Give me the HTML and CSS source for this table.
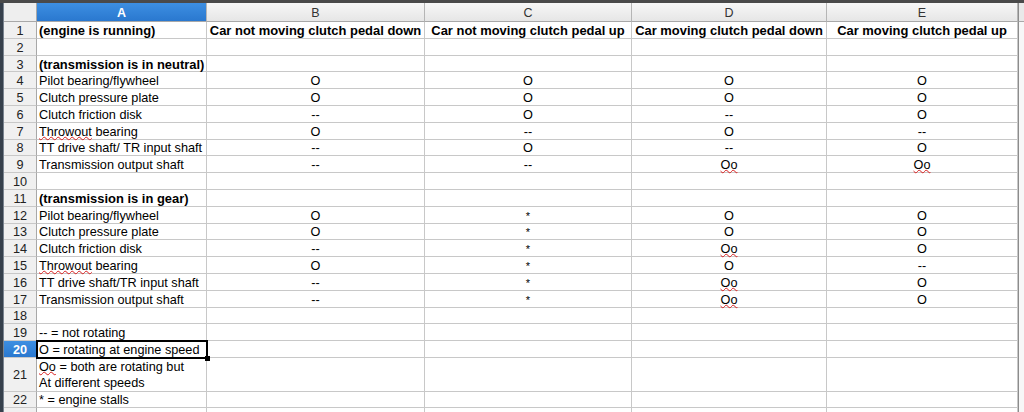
FILE: index.html
```html
<!DOCTYPE html>
<html>
<head>
<meta charset="utf-8">
<link rel="stylesheet" href="styles.css">
</head>
<body>
<div class="frame">
  <div class="strip"></div>
  <div class="sheet">
    <div class="c corner"></div><div class="c ch sel">A</div><div class="c ch">B</div><div class="c ch">C</div><div class="c ch">D</div><div class="c ch">E</div><div class="fhead"></div>
    <div class="fbody"></div>

    <div class="c rh">1</div><div class="c b">(engine is running)</div><div class="c v b">Car not moving clutch pedal down</div><div class="c v b">Car not moving clutch pedal up</div><div class="c v b">Car moving clutch pedal down</div><div class="c v b">Car moving clutch pedal up</div>
    <div class="c rh">2</div><div class="c"></div><div class="c"></div><div class="c"></div><div class="c"></div><div class="c"></div>
    <div class="c rh">3</div><div class="c b">(transmission is in neutral)</div><div class="c"></div><div class="c"></div><div class="c"></div><div class="c"></div>
    <div class="c rh">4</div><div class="c">Pilot bearing/flywheel</div><div class="c v">O</div><div class="c v">O</div><div class="c v">O</div><div class="c v">O</div>
    <div class="c rh">5</div><div class="c">Clutch pressure plate</div><div class="c v">O</div><div class="c v">O</div><div class="c v">O</div><div class="c v">O</div>
    <div class="c rh">6</div><div class="c">Clutch friction disk</div><div class="c v">--</div><div class="c v">O</div><div class="c v">--</div><div class="c v">O</div>
    <div class="c rh">7</div><div class="c"><span class="sp">Throwout</span>&nbsp;bearing</div><div class="c v">O</div><div class="c v">--</div><div class="c v">O</div><div class="c v">--</div>
    <div class="c rh">8</div><div class="c">TT drive shaft/ TR input shaft</div><div class="c v">--</div><div class="c v">O</div><div class="c v">--</div><div class="c v">O</div>
    <div class="c rh">9</div><div class="c">Transmission output shaft</div><div class="c v">--</div><div class="c v">--</div><div class="c v"><span class="sp">Oo</span></div><div class="c v"><span class="sp">Oo</span></div>
    <div class="c rh">10</div><div class="c"></div><div class="c"></div><div class="c"></div><div class="c"></div><div class="c"></div>
    <div class="c rh">11</div><div class="c b">(transmission is in gear)</div><div class="c"></div><div class="c"></div><div class="c"></div><div class="c"></div>
    <div class="c rh">12</div><div class="c">Pilot bearing/flywheel</div><div class="c v">O</div><div class="c v st">*</div><div class="c v">O</div><div class="c v">O</div>
    <div class="c rh">13</div><div class="c">Clutch pressure plate</div><div class="c v">O</div><div class="c v st">*</div><div class="c v">O</div><div class="c v">O</div>
    <div class="c rh">14</div><div class="c">Clutch friction disk</div><div class="c v">--</div><div class="c v st">*</div><div class="c v"><span class="sp">Oo</span></div><div class="c v">O</div>
    <div class="c rh">15</div><div class="c"><span class="sp">Throwout</span>&nbsp;bearing</div><div class="c v">O</div><div class="c v st">*</div><div class="c v">O</div><div class="c v">--</div>
    <div class="c rh">16</div><div class="c">TT drive shaft/TR input shaft</div><div class="c v">--</div><div class="c v st">*</div><div class="c v"><span class="sp">Oo</span></div><div class="c v">O</div>
    <div class="c rh">17</div><div class="c">Transmission output shaft</div><div class="c v">--</div><div class="c v st">*</div><div class="c v"><span class="sp">Oo</span></div><div class="c v">O</div>
    <div class="c rh">18</div><div class="c"></div><div class="c"></div><div class="c"></div><div class="c"></div><div class="c"></div>
    <div class="c rh">19</div><div class="c">-- = not rotating</div><div class="c"></div><div class="c"></div><div class="c"></div><div class="c"></div>
    <div class="c rh sel">20</div><div class="c cur">O = rotating at engine speed</div><div class="c"></div><div class="c"></div><div class="c"></div><div class="c"></div>
    <div class="c rh">21</div><div class="c two"><span class="sp">Oo</span> = both are rotating but<br>At different speeds</div><div class="c"></div><div class="c"></div><div class="c"></div><div class="c"></div>
    <div class="c rh">22</div><div class="c">* = engine stalls</div><div class="c"></div><div class="c"></div><div class="c"></div><div class="c"></div>
    <div class="c rh"></div><div class="c"></div><div class="c"></div><div class="c"></div><div class="c"></div><div class="c"></div>
  </div>
</div>
</body>
</html>
```

FILE: styles.css
```css
html, body {
  margin: 0;
  padding: 0;
}
body {
  width: 1024px;
  height: 412px;
  overflow: hidden;
  background: #ffffff;
  font-family: "Liberation Sans", Arial, sans-serif;
  font-size: 12.7px;
  color: #000;
}
.frame {
  display: flex;
  border-top: 3px solid #4a4a4a;
  height: 409px;
}
.strip {
  width: 4px;
  flex: none;
  background: #36404c;
  border-right: 1px solid #7a8490;
  box-sizing: border-box;
}
.sheet {
  flex: 1;
  display: grid;
  grid-template-columns: 33px 170px 218px 207px 195px 191px 1fr;
  grid-template-rows: 19px repeat(20, 16.8px) 33.6px 16.8px 16.8px;
}
.c {
  box-sizing: border-box;
  border-right: 1px solid #c8c8c8;
  border-bottom: 1px solid #c8c8c8;
  white-space: nowrap;
  display: flex;
  align-items: center;
  padding: 2px 2px 0;
  line-height: 14px;
  min-width: 0;
}
.corner {
  background: #eeeeee;
  border-right: 1px solid #a8a8a8;
  border-bottom: 1px solid #a8a8a8;
}
.ch {
  justify-content: center;
  background: linear-gradient(#f7f7f7, #e6e6e6);
  border-bottom: 1px solid #a8a8a8;
  border-right: 1px solid #b5b5b5;
  color: #333;
  font-size: 12.5px;
  padding-top: 2px;
}
.rh {
  justify-content: center;
  background: #f0f0f0;
  border-right: 1px solid #a8a8a8;
  color: #222;
}
.ch.sel, .rh.sel {
  background: linear-gradient(#3d8fe2, #2a78cf);
  color: #fff;
  font-weight: bold;
}
.fhead {
  grid-column: 7;
  grid-row: 1;
  background: #e9e9e9;
  border-left: 1px solid #8c8c8c;
  border-bottom: 1px solid #a8a8a8;
}
.fbody {
  grid-column: 7;
  grid-row: 2 / -1;
  background: #f7f7f7;
  border-left: 1px solid #8c8c8c;
}
.v {
  justify-content: center;
}
.b {
  font-weight: bold;
  font-size: 12.95px;
}
.st {
  font-size: 11px;
}
.sp {
  text-decoration: underline wavy #d81e1e;
  text-decoration-thickness: 1px;
  text-underline-offset: 0px;
  text-decoration-skip-ink: none;
}
.cur {
  position: relative;
  z-index: 1;
  outline: 2px solid #000;
  outline-offset: -1px;
}
.cur::after {
  content: "";
  position: absolute;
  right: -4px;
  bottom: -4px;
  width: 5px;
  height: 5px;
  background: #000;
}
.two {
  display: block;
  white-space: nowrap;
  line-height: 16px;
  padding-top: 1px;
}
```
